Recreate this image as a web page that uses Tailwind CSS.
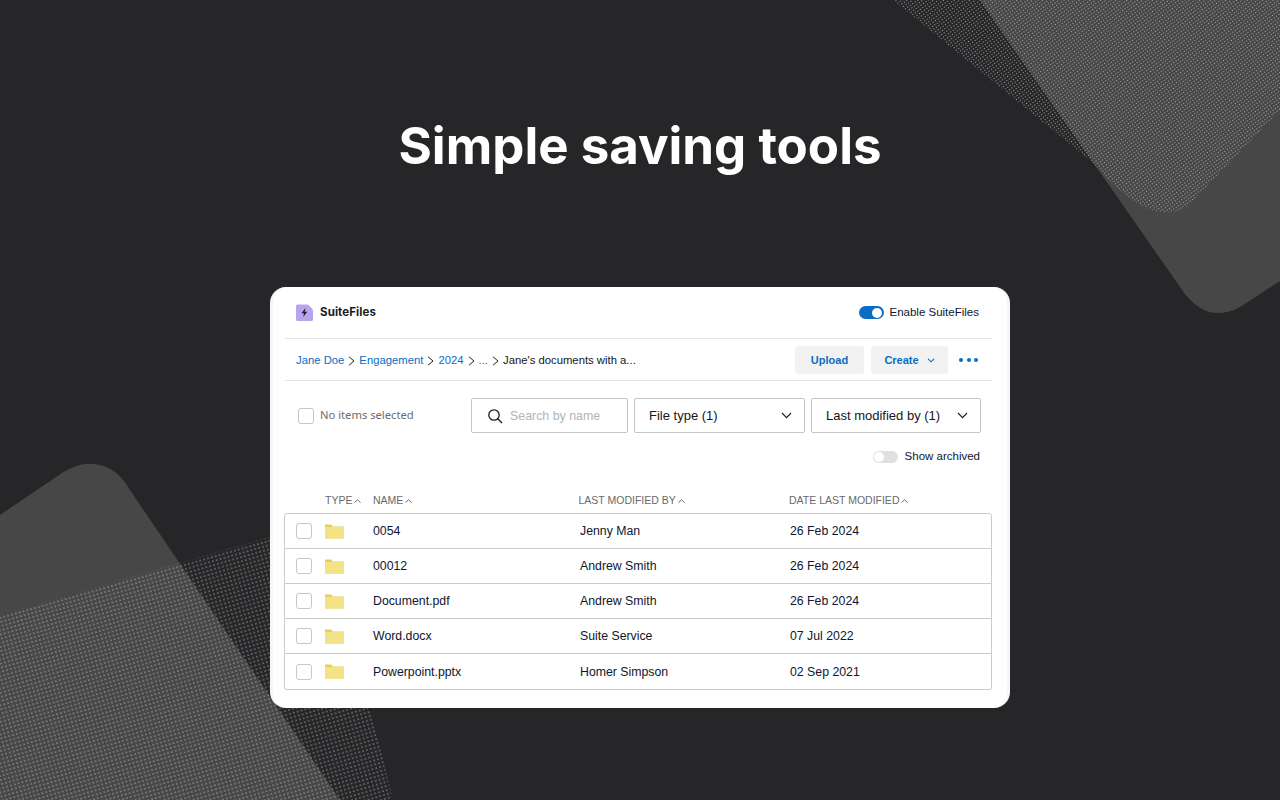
<!DOCTYPE html>
<html lang="en">
<head>
    <meta charset="UTF-8">
    <meta name="viewport" content="width=device-width, initial-scale=1.0">
    <title>Simple saving tools</title>
    <script src="https://cdn.jsdelivr.net/npm/@tailwindcss/browser@4"></script>
</head>
<body class="bg-[#262628] font-['Liberation_Sans',Arial,sans-serif]">
    <div class="relative w-[1280px] h-[800px] overflow-hidden flex flex-col items-center">
        <!-- background shapes -->
        <svg class="absolute inset-0" width="1280" height="800" viewBox="0 0 1280 800" fill="none">
            <defs>
                <pattern id="dotsTop" width="3" height="3" patternUnits="userSpaceOnUse" patternTransform="rotate(-35)">
                    <circle cx="1.5" cy="1.5" r="0.62" fill="#b9b9b9"></circle>
                </pattern>
                <pattern id="dotsBottom" width="4" height="4" patternUnits="userSpaceOnUse" patternTransform="rotate(-16)">
                    <circle cx="2" cy="2" r="0.6" fill="#ffffff"></circle>
                </pattern>
            </defs>
            <path d="M980 0 L1180 287 C1190 303 1204 313 1217 313 C1225 313 1233 311 1240 307 L1280 281 L1280 0 Z" fill="#474747"></path>
            <path d="M893 0 L1093 163 Q1130 205 1153 210 Q1170 216 1187 207 L1280 110 L1280 0 Z" fill="url(#dotsTop)"></path>
            <path d="M0 515 L62 473 Q88 456 112 470 Q122 476 130 490 L340 800 L0 800 Z" fill="#474747"></path>
            <path d="M0 615 L270 537 L372 715 L393 800 L0 800 Z" fill="url(#dotsBottom)"></path>
        </svg>

        <h1 class="relative mt-[113px] h-[174px] text-[51px] leading-[66px] font-bold text-white font-['Inter',sans-serif]">Simple saving tools</h1>

        <!-- card -->
        <div class="relative w-[740px] h-[421px] bg-white rounded-[16px] border-x-[3px] border-[#f6f6f7] pl-[12px] pr-[15px] text-[#0e1630]">
            <div class="h-[52px] flex items-center justify-between border-b border-[#e4e4e6] pl-[11px] pr-[13px]">
                <div class="flex items-center gap-[7px]">
                    <svg width="17" height="17" viewBox="0 0 17 17">
                        <path d="M1.5 0.5H11 Q12 0.5 13 1.5 L16 4.5 Q17 5.5 17 7 V15.5 Q17 17 15.5 17 H1.5 Q0 17 0 15.5 V2 Q0 0.5 1.5 0.5Z" fill="#b9a3ee"></path>
                        <path d="M9.5 4 L5.5 9.3 H8 L7.2 13 L11.2 7.8 H8.7 Z" fill="#1d1a2b"></path>
                    </svg>
                    <span class="mt-[1px] text-[11.5px] font-bold tracking-[0.1px] text-[#1b1b1f] font-['Inter',sans-serif]">SuiteFiles</span>
                </div>
                <div class="flex items-center gap-[6px]">
                    <div class="w-[25px] h-[13px] rounded-full bg-[#0a6cc4] flex items-center justify-end pr-[1.5px]">
                        <div class="w-[10px] h-[10px] rounded-full bg-white"></div>
                    </div>
                    <span class="mt-[1px] text-[11.5px]">Enable SuiteFiles</span>
                </div>
            </div>

            <div class="h-[42px] flex items-center justify-between border-b border-[#e4e4e6] pl-[11px]">
                <div class="mt-[2px] flex items-center gap-[3px] text-[11.3px] text-[#0a6cc4]">
                    <span>Jane Doe</span>
                    <svg width="9" height="10" viewBox="0 0 9 10" fill="none" stroke="#222" stroke-width="1"><path d="M2 0.8 L7 5 L2 9.2"></path></svg>
                    <span>Engagement</span>
                    <svg width="9" height="10" viewBox="0 0 9 10" fill="none" stroke="#222" stroke-width="1"><path d="M2 0.8 L7 5 L2 9.2"></path></svg>
                    <span>2024</span>
                    <svg width="9" height="10" viewBox="0 0 9 10" fill="none" stroke="#222" stroke-width="1"><path d="M2 0.8 L7 5 L2 9.2"></path></svg>
                    <span>...</span>
                    <svg width="9" height="10" viewBox="0 0 9 10" fill="none" stroke="#222" stroke-width="1"><path d="M2 0.8 L7 5 L2 9.2"></path></svg>
                    <span class="text-[#16161a]">Jane's documents with a...</span>
                </div>
                <div class="flex items-center pr-[14px]">
                    <button class="w-[69px] h-[28px] pt-[1px] rounded-[3px] bg-[#f2f2f3] text-[11px] font-bold text-[#0a6cc4]">Upload</button>
                    <button class="ml-[7px] w-[77px] h-[28px] pt-[1px] rounded-[3px] bg-[#f2f2f3] text-[11px] font-bold text-[#0a6cc4] flex items-center justify-center gap-[8px]">
                        Create
                        <svg width="8" height="5" viewBox="0 0 8 5" fill="none" stroke="#0a6cc4" stroke-width="1.1"><path d="M1 0.8 L4 3.8 L7 0.8"></path></svg>
                    </button>
                    <div class="ml-[11px] flex gap-[3.5px]">
                        <div class="w-[4px] h-[4px] rounded-full bg-[#0a6cc4]"></div>
                        <div class="w-[4px] h-[4px] rounded-full bg-[#0a6cc4]"></div>
                        <div class="w-[4px] h-[4px] rounded-full bg-[#0a6cc4]"></div>
                    </div>
                </div>
            </div>

            <div class="mt-[17px] h-[35px] flex items-center pl-[13px]">
                <div class="w-[16px] h-[16px] rounded-[3px] border border-[#c6c6c8]"></div>
                <span class="ml-[6px] w-[151px] text-[11.2px] text-[#6c6c6e] font-['Noto_Sans',sans-serif]">No items selected</span>
                <div class="w-[157px] h-[35px] rounded-[2px] border border-[#c4c4c6] flex items-center pl-[15px] gap-[7px]">
                    <svg width="16" height="16" viewBox="0 0 16 16" fill="none" stroke="#1a1a1e" stroke-width="1.3"><circle cx="7" cy="7" r="5.2"></circle><path d="M10.8 10.8 L15 15"></path></svg>
                    <span class="pt-[1px] text-[12.4px] text-[#b4b4b6]">Search by name</span>
                </div>
                <div class="ml-[6px] w-[171px] h-[35px] rounded-[2px] border border-[#c4c4c6] flex items-center justify-between pl-[14px] pr-[12px] text-[13px] text-[#16161a]">
                    <span>File type (1)</span>
                    <svg width="11" height="7" viewBox="0 0 11 7" fill="none" stroke="#1a1a1e" stroke-width="1.1"><path d="M1 1 L5.5 5.6 L10 1"></path></svg>
                </div>
                <div class="ml-[6px] w-[170px] h-[35px] rounded-[2px] border border-[#c4c4c6] flex items-center justify-between pl-[14px] pr-[12px] text-[13px] text-[#16161a]">
                    <span>Last modified by (1)</span>
                    <svg width="11" height="7" viewBox="0 0 11 7" fill="none" stroke="#1a1a1e" stroke-width="1.1"><path d="M1 1 L5.5 5.6 L10 1"></path></svg>
                </div>
            </div>

            <div class="mt-[17px] h-[13px] flex items-center justify-end gap-[7px] pr-[12px]">
                <div class="w-[25px] h-[12px] rounded-full bg-[#e0e0e1] flex items-center pl-[1px]">
                    <div class="w-[10px] h-[10px] rounded-full bg-white"></div>
                </div>
                <span class="text-[11.5px]">Show archived</span>
            </div>

            <div class="mt-[28px] mb-[2px] h-[20px] flex items-center text-[10.5px] text-[#69696b]">
                <span class="ml-[40px] w-[48px] flex items-center gap-[2px]">TYPE
                    <svg width="7" height="4" viewBox="0 0 7 4" fill="none" stroke="#69696b"><path d="M0.5 3.5 L3.5 0.8 L6.5 3.5"></path></svg>
                </span>
                <span class="w-[205.5px] flex items-center gap-[2px]">NAME
                    <svg width="7" height="4" viewBox="0 0 7 4" fill="none" stroke="#69696b"><path d="M0.5 3.5 L3.5 0.8 L6.5 3.5"></path></svg>
                </span>
                <span class="w-[210.5px] flex items-center gap-[2px]">LAST MODIFIED BY
                    <svg width="7" height="4" viewBox="0 0 7 4" fill="none" stroke="#69696b"><path d="M0.5 3.5 L3.5 0.8 L6.5 3.5"></path></svg>
                </span>
                <span class="flex items-center gap-[2px]">DATE LAST MODIFIED
                    <svg width="7" height="4" viewBox="0 0 7 4" fill="none" stroke="#69696b"><path d="M0.5 3.5 L3.5 0.8 L6.5 3.5"></path></svg>
                </span>
            </div>

            <div id="rows" class="-ml-[1px] rounded-[3px] border border-[#cbcbcd] divide-y divide-[#cbcbcd] text-[12.3px]"></div>
        </div>
    </div>

    <script>
        const files = [
            ['0054', 'Jenny Man', '26 Feb 2024'],
            ['00012', 'Andrew Smith', '26 Feb 2024'],
            ['Document.pdf', 'Andrew Smith', '26 Feb 2024'],
            ['Word.docx', 'Suite Service', '07 Jul 2022'],
            ['Powerpoint.pptx', 'Homer Simpson', '02 Sep 2021'],
        ];
        const rows = document.getElementById('rows');
        files.forEach(file => {
            const row = document.createElement('div');
            row.className = 'h-[35px] flex items-center pl-[11px]';
            row.innerHTML = `
                <div class="w-[16px] h-[16px] rounded-[3px] border border-[#c6c6c8]"></div>
                <svg class="ml-[13px]" width="19" height="15" viewBox="0 0 19 15">
                    <path d="M0 1 Q0 0.5 0.5 0.5 H6 L8 2.5 H19 V14.5 H0 Z" fill="#e3ce5c"></path>
                    <path d="M0 3 H19 V14.5 H0 Z" fill="#f3e286"></path>
                </svg>
                <span class="ml-[29px] w-[207px] pt-[1px]">${file[0]}</span>
                <span class="w-[210px] pt-[1px]">${file[1]}</span>
                <span class="pt-[1px]">${file[2]}</span>
            `;
            rows.appendChild(row);
        });
    </script>
</body>
</html>
